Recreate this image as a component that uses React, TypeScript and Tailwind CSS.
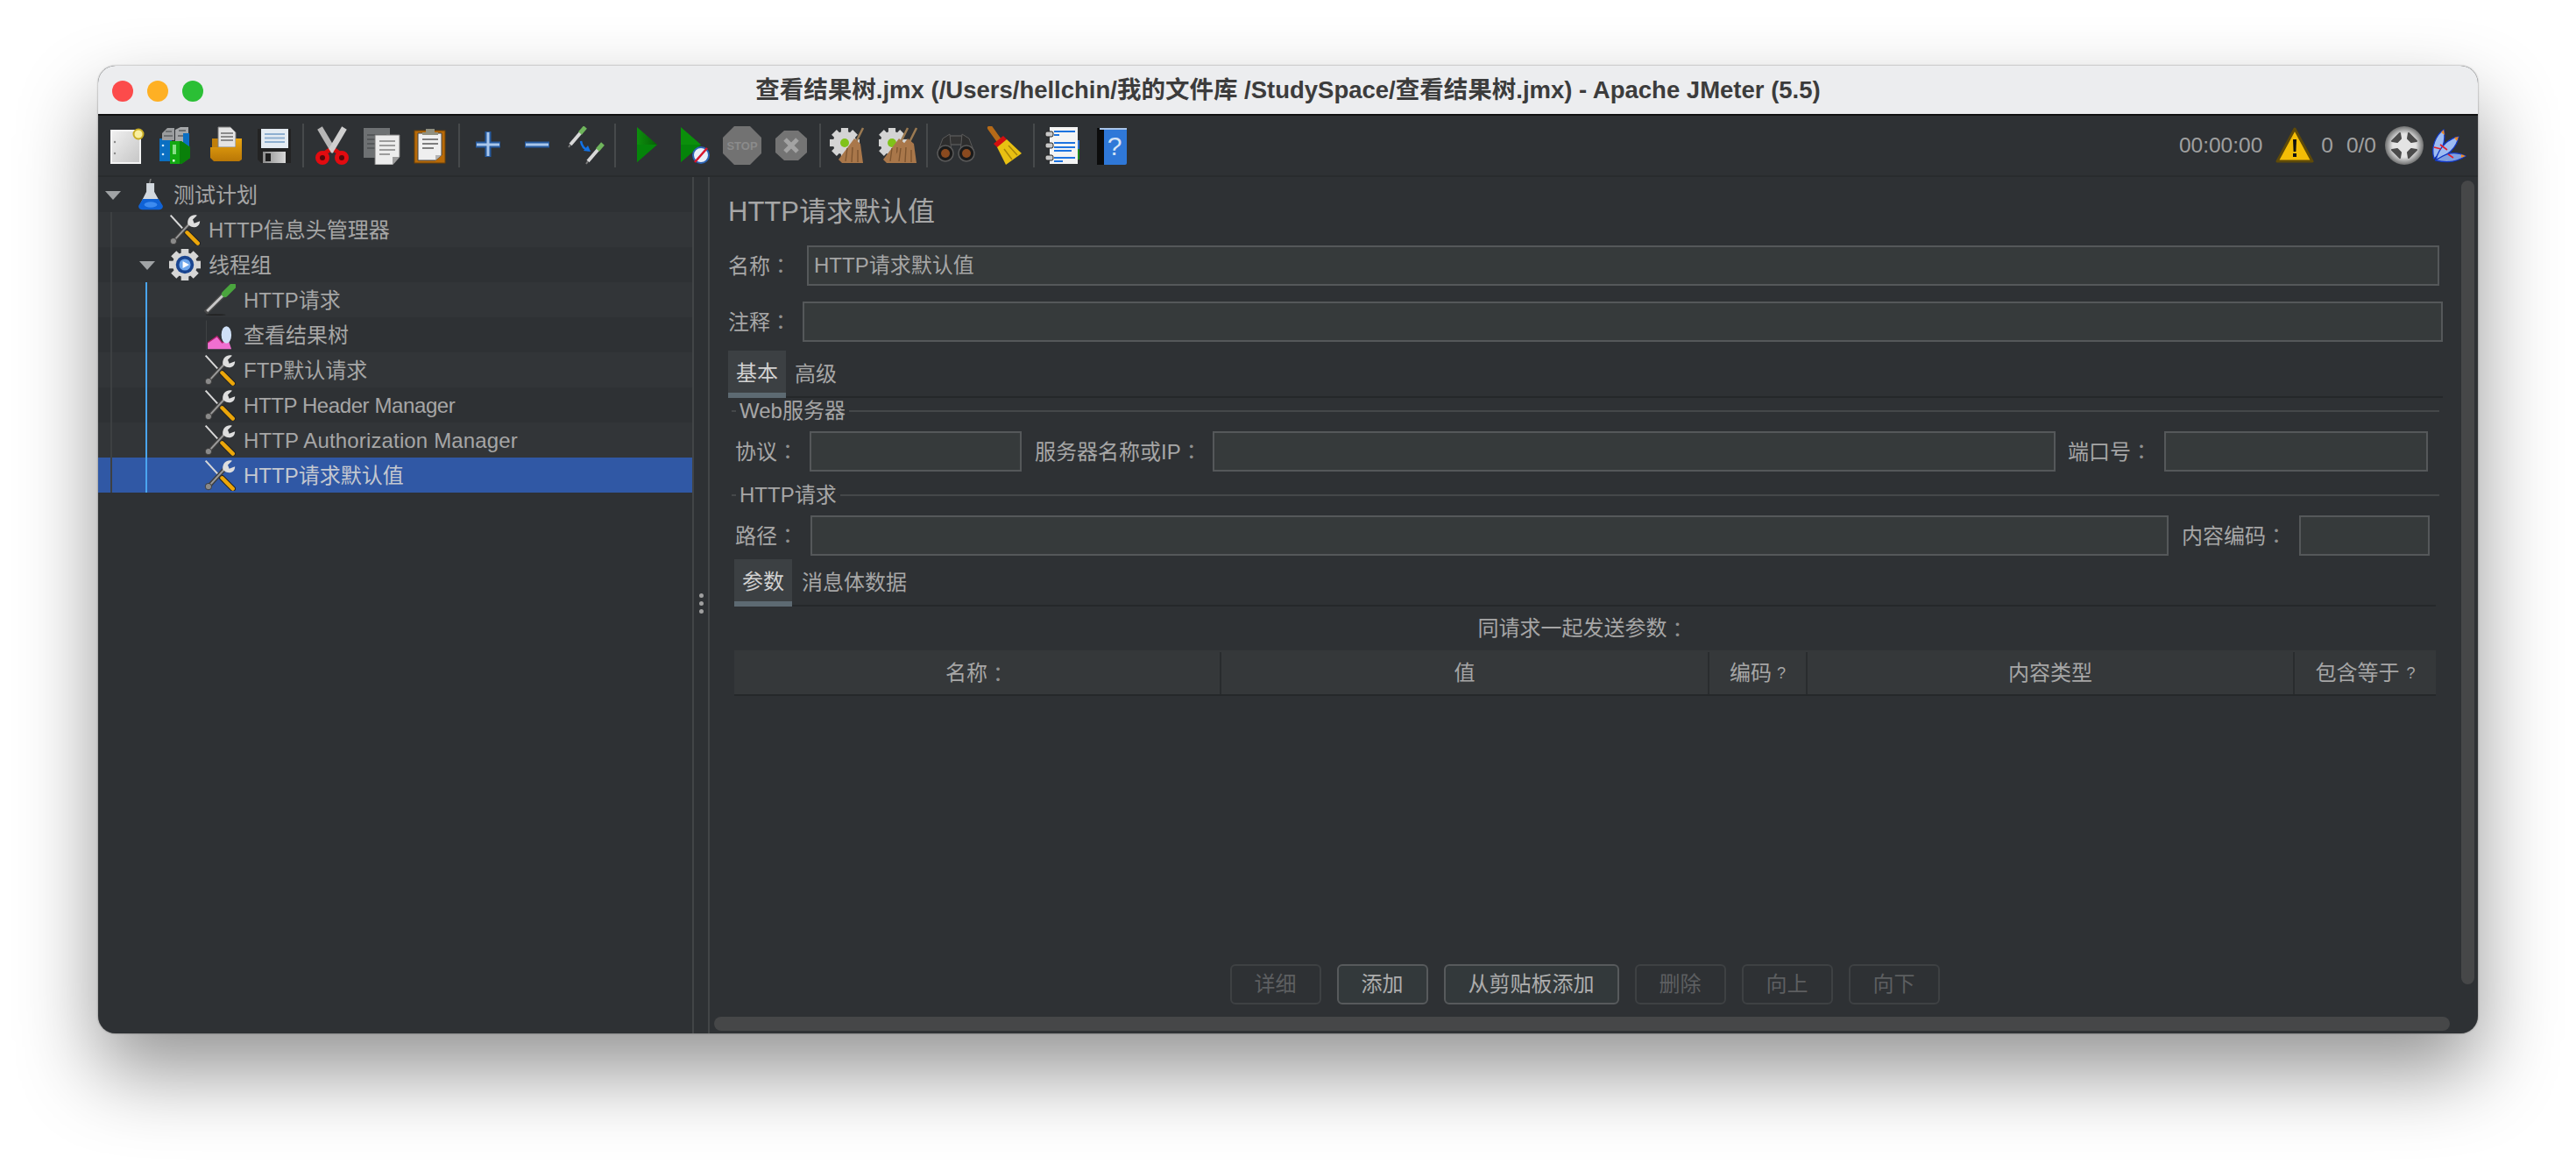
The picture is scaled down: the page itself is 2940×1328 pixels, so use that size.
import type { ReactNode } from 'react';

const Svg = ({ size = 44, children }: { size?: number; children: ReactNode }) => (
  <svg width={size} height={size} viewBox="0 0 44 44" className="block shrink-0">
    {children}
  </svg>
);

const teeth = [0, 45, 90, 135, 180, 225, 270, 315];

// shared cog shape, used by the tree gear and the clear icons
const Cog = ({ cx, cy, r, fill }: { cx: number; cy: number; r: number; fill: string }) => (
  <g>
    {teeth.map((a) => (
      <rect
        key={a}
        x={cx - r * 0.24}
        y={cy - r}
        width={r * 0.48}
        height={r * 0.4}
        fill={fill}
        transform={`rotate(${a} ${cx} ${cy})`}
      />
    ))}
    <circle cx={cx} cy={cy} r={r * 0.78} fill={fill} />
  </g>
);

// toolbar icons
const NewIcon = () => (
  <Svg>
    <defs>
      <linearGradient id="newg" x1="0" y1="0" x2="1" y2="1">
        <stop offset="0" stopColor="#f0f0f0" />
        <stop offset="1" stopColor="#c6c6c6" />
      </linearGradient>
    </defs>
    <rect x="4" y="5" width="33" height="37" fill="url(#newg)" stroke="#f4f4f4" strokeWidth="2" />
    <circle cx="8" cy="18" r="1.2" fill="#8a8a8a" />
    <circle cx="8" cy="31" r="1.2" fill="#8a8a8a" />
    <circle cx="35" cy="9" r="5.5" fill="#f9ef9f" stroke="#c9ad25" strokeWidth="2" />
  </Svg>
);
const TemplatesIcon = () => (
  <Svg>
    <rect x="3" y="14" width="14" height="26" fill="#0b6fc2" />
    <path d="M6 8 L12 2 H20 V16 H6 Z" fill="#9a9c9e" />
    <path d="M21 4 L27 1 H36 V18 H21 Z" fill="#a6a8aa" />
    <path d="M10 6 H17 M25 5 H33 M8 11 H18 M24 11 H34" stroke="#6d7072" strokeWidth="2" />
    <rect x="30" y="8" width="7" height="24" fill="#0b6fc2" />
    <circle cx="7" cy="22" r="1.3" fill="#d5ecff" />
    <circle cx="7" cy="32" r="1.3" fill="#d5ecff" />
    <path d="M15 17 H28 L38 24 V36 L28 43 H15 Z" fill="#12a812" />
    <path d="M26 17 H28 L38 24 V36 L28 43 H26 Z" fill="#0a800a" />
    <rect x="18" y="21" width="4" height="11" fill="#86de86" />
    <rect x="18" y="38" width="2.5" height="2.5" fill="#e8ffe8" />
  </Svg>
);
const OpenIcon = () => (
  <Svg>
    <defs>
      <linearGradient id="foldg" x1="0" y1="0" x2="0" y2="1">
        <stop offset="0" stopColor="#eaa511" />
        <stop offset="1" stopColor="#b97706" />
      </linearGradient>
    </defs>
    <rect x="7" y="14" width="8" height="14" fill="#c07f0a" />
    <path d="M14 1 H28 L34 7 V24 H14 Z" fill="#e4e4e4" stroke="#7f7f7f" strokeWidth="1" />
    <path d="M17 8 H31 M17 12 H31 M17 16 H31" stroke="#8b8b8b" strokeWidth="2" />
    <path d="M34 14 H41 V38 L38 40 H9 L5 36 V24 H34 Z" fill="url(#foldg)" />
  </Svg>
);
const SaveIcon = () => (
  <Svg>
    <defs>
      <linearGradient id="shutg" x1="0" y1="0" x2="1" y2="0">
        <stop offset="0" stopColor="#8c8c8c" />
        <stop offset="1" stopColor="#d8d8d8" />
      </linearGradient>
    </defs>
    <path d="M3 3 H41 V42 H7 L3 38 Z" fill="#232323" />
    <rect x="7" y="3" width="31" height="22" fill="#e4ebf2" />
    <path d="M11 9 H34 M11 13.5 H34 M11 18 H34" stroke="#8eafd0" strokeWidth="2" />
    <rect x="9" y="29" width="26" height="13" fill="url(#shutg)" />
    <rect x="12" y="31" width="6" height="9" fill="#1e1e1e" />
  </Svg>
);
const CutIcon = () => (
  <Svg>
    <path d="M8 2 L24 29" stroke="#b6b6b6" strokeWidth="6.5" />
    <path d="M36 2 L20 29" stroke="#cfcfcf" strokeWidth="6.5" />
    <path d="M19 27 L12 32 M25 27 L32 32" stroke="#d70d0d" strokeWidth="5" />
    <ellipse cx="11" cy="36" rx="5.5" ry="5.5" fill="#55080a" stroke="#e20b10" strokeWidth="5" />
    <ellipse cx="33" cy="36" rx="5.5" ry="5.5" fill="#55080a" stroke="#e20b10" strokeWidth="5" />
  </Svg>
);
const CopyIcon = () => (
  <Svg>
    <rect x="2" y="2" width="30" height="34" fill="#6e7173" />
    <path d="M6 10 H28 M6 15 H28 M6 20 H28 M6 25 H28" stroke="#55585a" strokeWidth="1.8" />
    <path d="M15 10 H43 V35 L35 44 H15 Z" fill="#ececec" stroke="#7a7a7a" strokeWidth="1" />
    <path d="M35 44 V35 H43 Z" fill="#9b9b9b" />
    <path d="M20 17 H38 M20 22 H38 M20 27 H38 M20 32 H32" stroke="#9c9c9c" strokeWidth="1.8" />
  </Svg>
);
const PasteIcon = () => (
  <Svg>
    <rect x="4" y="5" width="35" height="37" fill="#b86a08" stroke="#6c4208" strokeWidth="1" />
    <path d="M8 8 H35 V33 L28 39 H8 Z" fill="#efefef" stroke="#444" strokeWidth="1" />
    <path d="M28 39 V33 H35 Z" fill="#b4b4b4" />
    <path d="M13 15 H31 M13 20 H31 M13 25 H26" stroke="#7d7d7d" strokeWidth="1.8" />
    <path d="M17 7 V3 H27 V7 H31 V10 H13 V7 Z" fill="#8f8f7f" />
  </Svg>
);
const PlusIcon = () => (
  <Svg>
    <path d="M22 6 V35 M8 21 H36" stroke="#255a9f" strokeWidth="7" />
    <path d="M22 7 V34 M9 21 H35" stroke="#a9c6ea" strokeWidth="3" />
  </Svg>
);
const MinusIcon = () => (
  <Svg>
    <path d="M8 21 H36" stroke="#255a9f" strokeWidth="7" />
    <path d="M9 21 H35" stroke="#a9c6ea" strokeWidth="3" />
  </Svg>
);
const PipetteSmall = ({ x, y }: { x: number; y: number }) => (
  <g transform={`translate(${x} ${y})`}>
    <path d="M0 20 L12 6" stroke="#d8d8d8" strokeWidth="4" />
    <path d="M0 20 L-2 23" stroke="#777" strokeWidth="2" />
    <path d="M11 7 L17 0" stroke="#6fb55c" strokeWidth="5" />
  </g>
);
const ToggleIcon = () => (
  <Svg>
    <PipetteSmall x={4} y={1} />
    <PipetteSmall x={24} y={20} />
    <path d="M16 17 C17 23 20 26 24 27" fill="none" stroke="#1272e6" strokeWidth="2.5" />
    <path d="M19 28 L27 29 L24 22 Z" fill="#1272e6" />
  </Svg>
);
const StartIcon = () => (
  <Svg>
    <defs>
      <linearGradient id="playg" x1="0" y1="0" x2="1" y2="0">
        <stop offset="0" stopColor="#0d8f0d" />
        <stop offset="1" stopColor="#066006" />
      </linearGradient>
    </defs>
    <path d="M14 1 L37 21 L14 41 Z" fill="url(#playg)" />
    <path d="M14 21 L37 21 L14 41 Z" fill="#05840a" />
  </Svg>
);
const NoTimersIcon = () => (
  <Svg>
    <path d="M8 1 L31 21 L8 41 Z" fill="#0b8f0b" />
    <path d="M8 21 L31 21 L8 41 Z" fill="#05840a" />
    <circle cx="31" cy="33" r="9" fill="#e8eef8" stroke="#2b63b4" strokeWidth="2" />
    <path d="M24 41 L38 25" stroke="#d8152d" strokeWidth="2.5" />
  </Svg>
);
const StopIcon = () => (
  <Svg>
    <path d="M13 0 H31 L44 13 V31 L31 44 H13 L0 31 V13 Z" fill="#727272" />
    <text x="22" y="27" textAnchor="middle" fontSize="13" fontWeight="700" fill="#8b8b8b" fontFamily="Liberation Sans">STOP</text>
  </Svg>
);
const ShutdownIcon = () => (
  <Svg>
    <path d="M14 5 H30 L40 14 V30 L30 39 H14 L4 30 V14 Z" fill="#747474" />
    <path d="M15 15 L29 29 M29 15 L15 29" stroke="#a3a3a3" strokeWidth="5" />
  </Svg>
);
const Broom = ({ x = 0 }: { x?: number }) => (
  <g transform={`translate(${x} 0)`}>
    <path d="M38 2 L30 18" stroke="#9b7a52" strokeWidth="2.5" />
    <path d="M28 14 L35 20 L38 42 H14 L10 38 Z" fill="#a9774a" />
    <path d="M20 25 L18 40 M26 24 L25 41 M32 27 L32 41" stroke="#7e5530" strokeWidth="1.4" />
  </g>
);
const Gear = ({ x = 0 }: { x?: number }) => (
  <g transform={`translate(${x} 0)`}>
    <Cog cx={17} cy={19} r={17} fill="#d4d4d4" />
    <circle cx="17" cy="19" r="5" fill="#80c21a" />
  </g>
);
const ClearIcon = () => (
  <Svg>
    <Gear />
    <Broom />
  </Svg>
);
const ClearAllIcon = () => (
  <Svg>
    <Gear x={-2} />
    <Broom x={-5} />
    <Broom x={5} />
  </Svg>
);
const SearchIcon = () => (
  <Svg>
    <rect x="15" y="11" width="14" height="10" fill="#333" stroke="#666" />
    <path d="M7 14 L15 9 L17 30 H1 Z" fill="#2d2d2d" stroke="#5a5a5a" strokeWidth="1" />
    <path d="M37 14 L29 9 L27 30 H43 Z" fill="#2d2d2d" stroke="#5a5a5a" strokeWidth="1" />
    <circle cx="10" cy="31" r="9" fill="#1b1b1b" stroke="#5a5a5a" strokeWidth="1.5" />
    <circle cx="34" cy="31" r="9" fill="#1b1b1b" stroke="#5a5a5a" strokeWidth="1.5" />
    <circle cx="10" cy="31" r="5" fill="#8a4a1f" />
    <circle cx="34" cy="31" r="5" fill="#8a4a1f" />
  </Svg>
);
const BroomIcon = () => (
  <Svg>
    <path d="M5 2 L15 16" stroke="#b56a18" strokeWidth="6" strokeLinecap="round" />
    <path d="M9 20 L20 11 L24 15 L14 25 Z" fill="#d30f0f" />
    <path d="M13 24 L24 15 L41 31 L23 44 Z" fill="#e8c012" />
    <path d="M21 26 L30 38 M26 22 L36 33" stroke="#a88508" strokeWidth="1.5" />
  </Svg>
);
const LogIcon = () => (
  <Svg>
    <rect x="36" y="16" width="5" height="10" fill="#2a6cc4" />
    <rect x="36" y="26" width="5" height="12" fill="#1d8a1d" />
    <rect x="7" y="1" width="32" height="42" fill="#f4f4f4" />
    <path d="M12 6 H36 M12 10 H18 M12 19 H36 M12 24 H36 M12 28 H32 M12 36 H36 M12 40 H22" stroke="#1e74e0" strokeWidth="2" />
    <rect x="2" y="6" width="9" height="6" rx="2" fill="#c8c8c8" stroke="#222" />
    <rect x="2" y="19" width="9" height="6" rx="2" fill="#c8c8c8" stroke="#222" />
    <rect x="2" y="33" width="9" height="6" rx="2" fill="#c8c8c8" stroke="#222" />
  </Svg>
);
const HelpIcon = () => (
  <Svg>
    <rect x="5" y="2" width="34" height="42" rx="2" fill="#2f78d8" />
    <rect x="5" y="2" width="8" height="42" fill="#0c0c0c" />
    <rect x="8" y="2" width="31" height="2" fill="#a8c4ea" />
    <text x="25" y="33" textAnchor="middle" fontSize="30" fill="#d6e4f6" fontFamily="Liberation Sans">?</text>
  </Svg>
);
const WarningIcon = () => (
  <Svg>
    <path d="M22 3 L42 40 H2 Z" fill="#f4bd06" stroke="#5f4a08" strokeWidth="3" strokeLinejoin="round" />
    <path d="M20 15 H24 L23.4 29 H20.6 Z" fill="#111" />
    <rect x="20" y="31" width="4" height="4" fill="#111" />
  </Svg>
);
const GuiIcon = () => (
  <Svg>
    <defs>
      <radialGradient id="guig">
        <stop offset="0.6" stopColor="#e4e4e4" />
        <stop offset="1" stopColor="#6f7070" />
      </radialGradient>
    </defs>
    <circle cx="22" cy="22" r="22" fill="url(#guig)" />
    <path d="M8 17 L17 8 L18 14 L14 18 Z M36 17 L27 8 L26 14 L30 18 Z M8 27 L17 36 L18 30 L14 26 Z M36 27 L27 36 L26 30 L30 26 Z" fill="#4b4b4b" stroke="#4b4b4b" strokeWidth="2" strokeLinejoin="round" />
  </Svg>
);
const FeatherIcon = () => (
  <Svg>
    <path d="M6 37 C2 24 8 10 17 4 C20 16 15 30 6 37 Z" fill="#9dbcf2" stroke="#1238c4" strokeWidth="1.3" />
    <path d="M8 38 C12 24 22 14 34 12 C32 24 22 34 8 38 Z" fill="#9dbcf2" stroke="#1238c4" strokeWidth="1.3" />
    <path d="M8 39 C20 30 30 28 42 34 C32 41 20 42 8 39 Z" fill="#7f9fe0" stroke="#1238c4" strokeWidth="1.3" />
    <path d="M14 7 L17 4 L18 10 Z M29 13 L34 12 L32 17 Z M37 32 L42 34 L37 36 Z" fill="#f08a1d" />
    <path d="M6 24 L14 26 M13 21 L21 27 M22 32 L28 36" stroke="#e3202c" strokeWidth="1.6" />
  </Svg>
);

// tree icons
const FlaskIcon = () => (
  <Svg size={36}>
    <path d="M22 0 L20 8" stroke="#777" strokeWidth="2" />
    <path d="M16 6 H27 V18 L38 38 Q38 42 34 42 H10 Q6 42 6 38 L16 18 Z" fill="#d2d8de" />
    <path d="M11 28 H33 L39 38 Q39 43 34 43 H10 Q5 43 5 38 Z" fill="#0f62d6" />
    <ellipse cx="22" cy="36" rx="9" ry="4" fill="#3d8bf0" />
  </Svg>
);
const ToolIcon = () => (
  <Svg size={36}>
    <path d="M2 2 L25 27" stroke="#d8d8d8" strokeWidth="2.5" />
    <path d="M25 26 L40 41" stroke="#222" strokeWidth="8" strokeLinecap="round" />
    <path d="M25 26 L40 41" stroke="#eba60a" strokeWidth="5.5" strokeLinecap="round" />
    <path d="M6 38 L30 12" stroke="#3d3d3d" strokeWidth="6" />
    <path d="M6 38 L30 12" stroke="#9a9a9a" strokeWidth="2.5" />
    <circle cx="6" cy="38" r="4.5" fill="#8a8a8a" stroke="#333" strokeWidth="1" />
    <path d="M26 14 C25 6 31 0 39 2 L33 8 L35 13 L43 10 C43 19 33 22 26 14 Z" fill="#dedede" />
  </Svg>
);
const GearIcon = () => (
  <Svg size={36}>
    <Cog cx={22} cy={22} r={22} fill="#d6d6d6" />
    <circle cx="22" cy="22" r="12.5" fill="#1a4590" />
    <circle cx="22" cy="22" r="8" fill="#6ca6ec" />
    <path d="M19 17 L28 22 L19 27 Z" fill="#fff" />
  </Svg>
);
const PipetteIcon = () => (
  <Svg size={36}>
    <path d="M2 40 L28 14" stroke="#4a4a4a" strokeWidth="7" />
    <path d="M4 38 L28 14" stroke="#c8c8c8" strokeWidth="3.5" />
    <path d="M29 14 L40 3" stroke="#4aa53e" strokeWidth="9" strokeLinecap="round" />
    <ellipse cx="16" cy="43" rx="14" ry="1" fill="#222" />
  </Svg>
);
const ChartIcon = () => (
  <Svg size={36}>
    <path d="M3 2 V43" stroke="#45484a" strokeWidth="1" />
    <path d="M5 42 V33 L18 24 L25 33 L34 30 L38 42 Z" fill="#f06fd0" />
    <path d="M5 33 L18 24 L25 33 L34 30" fill="none" stroke="#b01f6a" strokeWidth="1.5" />
    <ellipse cx="31" cy="22" rx="7" ry="12" fill="#cfe0f7" />
  </Svg>
);

const TOOLS = [
  { icon: <NewIcon /> }, { icon: <TemplatesIcon /> }, { icon: <OpenIcon /> }, { icon: <SaveIcon /> },
];

const Slot = ({ children }: { children: ReactNode }) => (
  <div className="flex h-[44px] w-[56px] items-center justify-center">{children}</div>
);
const Sep = () => <div className="mx-[4px] h-[50px] w-[2px] bg-[#46494b]" />;

const Colon = () => <span className="font-['Noto_Sans_CJK_TC',sans-serif] text-[#8f8f8f]">：</span>;

const Input = ({ className = '', children }: { className?: string; children?: ReactNode }) => (
  <div className={`flex h-[46px] items-center border-2 border-[#55585a] bg-[#363a3b] pl-[6px] text-[24px] ${className}`}>
    {children}
  </div>
);

const Group = ({ title }: { title: string }) => (
  <div className="ml-[4px] mr-[4px] flex h-[30px] items-center">
    <div className="h-[2px] w-[5px] bg-[#45484a]" />
    <span className="ml-[4px] mr-[4px] text-[24px] leading-none">{title}</span>
    <div className="h-[2px] flex-1 bg-[#45484a]" />
  </div>
);

const Tab = ({ label }: { label: string }) => (
  <div className="flex h-[54px] w-[66px] items-center justify-center border-b-[6px] border-[#5d6a72] bg-[#3c4043] pt-[4px] text-[24px] text-[#d2d2d2]">
    {label}
  </div>
);

const treeRows = [
  { label: '测试计划', pad: 'pl-[8px]', caret: 'mr-[16px]', gap: 'mr-[8px]', icon: <FlaskIcon />, alt: false },
  { label: 'HTTP信息头管理器', pad: 'pl-[81px]', icon: <ToolIcon />, alt: true },
  { label: '线程组', pad: 'pl-[47px]', caret: 'mr-[16px]', icon: <GearIcon />, alt: false },
  { label: 'HTTP请求', pad: 'pl-[121px]', icon: <PipetteIcon />, alt: true },
  { label: '查看结果树', pad: 'pl-[121px]', icon: <ChartIcon />, alt: false },
  { label: 'FTP默认请求', pad: 'pl-[121px]', icon: <ToolIcon />, alt: true },
  { label: 'HTTP Header Manager', pad: 'pl-[121px]', icon: <ToolIcon />, alt: false, track: 'tracking-[-0.4px]' },
  { label: 'HTTP Authorization Manager', pad: 'pl-[121px]', icon: <ToolIcon />, alt: true, track: 'tracking-[0.15px]' },
  { label: 'HTTP请求默认值', pad: 'pl-[121px]', icon: <ToolIcon />, selected: true },
];

const columns = [
  { w: 'w-[556px]', label: <>名称<Colon /></> },
  { w: 'w-[557px]', label: '值' },
  { w: 'w-[112px]', label: <>编码<span className="ml-[6px] text-[18px]">?</span></> },
  { w: 'w-[556px]', label: '内容类型' },
  { w: 'flex-1', label: <>包含等于<span className="ml-[8px] text-[18px]">?</span></> },
];

const buttons = [
  { label: '详细', w: 'w-[104px]' },
  { label: '添加', w: 'w-[104px]', on: true },
  { label: '从剪贴板添加', w: 'w-[200px]', on: true },
  { label: '删除', w: 'w-[104px]' },
  { label: '向上', w: 'w-[104px]' },
  { label: '向下', w: 'w-[104px]' },
];

export default function App() {
  return (
    <div className="h-[1328px] w-[2940px] overflow-hidden bg-white pl-[112px] pt-[75px] font-['Liberation_Sans','Noto_Sans_CJK_SC',sans-serif]">
      <div className="flex h-[1104px] w-[2716px] flex-col overflow-hidden rounded-[20px] bg-[#2e3134] text-[#a6a6a6] shadow-[0_44px_90px_rgba(0,0,0,0.42),0_0_2px_rgba(0,0,0,0.5)]">
        {/* title bar */}
        <div className="relative flex h-[57px] shrink-0 items-center justify-center border-b-2 border-[#111] bg-[#ecedef]">
          <div className="absolute left-[16px] top-[17px] flex gap-[16px]">
            <div className="h-[24px] w-[24px] rounded-full bg-[#fc4b4b]" />
            <div className="h-[24px] w-[24px] rounded-full bg-[#feb024]" />
            <div className="h-[24px] w-[24px] rounded-full bg-[#2bbf35]" />
          </div>
          <span className="text-[27.5px] font-bold text-[#3c3c3c]">
            查看结果树.jmx (/Users/hellchin/我的文件库 /StudySpace/查看结果树.jmx) - Apache JMeter (5.5)
          </span>
        </div>

        {/* toolbar */}
        <div className="flex h-[70px] shrink-0 items-center border-b-2 border-[#282b2d] pl-[5px]">
          {TOOLS.map((t, i) => <Slot key={i}>{t.icon}</Slot>)}
          <Sep />
          <Slot><CutIcon /></Slot>
          <Slot><CopyIcon /></Slot>
          <Slot><PasteIcon /></Slot>
          <Sep />
          <Slot><PlusIcon /></Slot>
          <Slot><MinusIcon /></Slot>
          <Slot><ToggleIcon /></Slot>
          <Sep />
          <Slot><StartIcon /></Slot>
          <Slot><NoTimersIcon /></Slot>
          <Slot><StopIcon /></Slot>
          <Slot><ShutdownIcon /></Slot>
          <Sep />
          <Slot><ClearIcon /></Slot>
          <Slot><ClearAllIcon /></Slot>
          <Sep />
          <Slot><SearchIcon /></Slot>
          <Slot><BroomIcon /></Slot>
          <Sep />
          <Slot><LogIcon /></Slot>
          <Slot><HelpIcon /></Slot>
          <div className="ml-auto flex items-center pr-[12px] text-[24.5px] text-[#a0a0a0]">
            <span>00:00:00</span>
            <div className="ml-[15px]"><WarningIcon /></div>
            <span className="ml-[8px]">0</span>
            <span className="ml-[15px]">0/0</span>
            <div className="ml-[10px]"><GuiIcon /></div>
            <div className="ml-[6px]"><FeatherIcon /></div>
          </div>
        </div>

        <div className="flex min-h-0 flex-1">
          {/* tree */}
          <div className="relative w-[678px] shrink-0">
            {treeRows.map((row) => (
              <div
                key={row.label}
                className={`flex h-[40px] items-center pt-[2px] text-[24px] ${row.pad} ${row.selected ? 'bg-[#3058a5] text-[#c4c8d0]' : row.alt ? 'bg-[#323538]' : ''}`}
              >
                {row.caret && (
                  <div className={`h-0 w-0 border-x-[9px] border-t-[10px] border-x-transparent border-t-[#a0a3a5] ${row.caret}`} />
                )}
                <div className={`-mt-[2px] ${row.gap ?? 'mr-[9px]'}`}>{row.icon}</div>
                <span className={row.track}>{row.label}</span>
              </div>
            ))}
            <div className="absolute left-[14px] top-[40px] h-[320px] w-[2px] bg-[#3d4042]" />
            <div className="absolute left-[54px] top-[120px] h-[240px] w-[2px] bg-[#4aa5f0]" />
          </div>

          {/* splitter */}
          <div className="flex w-[20px] shrink-0 flex-col items-center justify-center gap-[4px] border-x-2 border-[#424547] pb-[4px]">
            <div className="h-[5px] w-[5px] rounded-full bg-[#a0a0a0]" />
            <div className="h-[5px] w-[5px] rounded-full bg-[#a0a0a0]" />
            <div className="h-[5px] w-[5px] rounded-full bg-[#a0a0a0]" />
          </div>

          {/* editor */}
          <div className="relative flex min-w-0 flex-1 flex-col pb-[33px] pl-[21px] pr-[40px] text-[24px]">
            <div className="flex h-[78px] shrink-0 items-center pt-[2px] text-[31px]">HTTP请求默认值</div>

            <div className="mr-[4px] flex items-center">
              <span className="w-[90px] shrink-0">名称<Colon /></span>
              <Input className="flex-1">HTTP请求默认值</Input>
            </div>
            <div className="mt-[18px] flex items-center">
              <span className="w-[85px] shrink-0">注释<Colon /></span>
              <Input className="flex-1" />
            </div>

            <div className="mt-[10px] flex h-[54px] items-start border-b-2 border-[#25282a]">
              <Tab label="基本" />
              <span className="ml-[10px] flex h-[52px] items-center pt-[2px]">高级</span>
            </div>

            <Group title="Web服务器" />
            <div className="mr-[17px] mt-[8px] flex items-center pl-[8px]">
              <span className="w-[85px] shrink-0">协议<Colon /></span>
              <Input className="w-[242px] shrink-0" />
              <span className="ml-[15px] w-[203px] shrink-0">服务器名称或IP<Colon /></span>
              <Input className="flex-1" />
              <span className="ml-[14px] w-[110px] shrink-0">端口号<Colon /></span>
              <Input className="w-[301px] shrink-0" />
            </div>

            <div className="mt-[12px]"><Group title="HTTP请求" /></div>
            <div className="mr-[15px] mt-[8px] flex items-center pl-[8px]">
              <span className="w-[86px] shrink-0">路径<Colon /></span>
              <Input className="flex-1" />
              <span className="ml-[15px] w-[134px] shrink-0">内容编码<Colon /></span>
              <Input className="w-[149px] shrink-0" />
            </div>

            <div className="ml-[7px] mr-[8px] mt-[4px] flex h-[54px] items-start border-b-2 border-[#25282a]">
              <Tab label="参数" />
              <span className="ml-[11px] flex h-[52px] items-center pt-[2px]">消息体数据</span>
            </div>

            <div className="flex h-[50px] items-center justify-center pr-[6px]">同请求一起发送参数<Colon /></div>

            <div className="ml-[7px] mr-[8px] flex h-[52px] border-b-2 border-[#25282a] bg-[#35383a] pt-[2px]">
              {columns.map((c, i) => (
                <div
                  key={i}
                  className={`flex items-center justify-center border-r-2 border-[#292c2e] last:border-r-0 ${c.w}`}
                >
                  {c.label}
                </div>
              ))}
            </div>

            <div className="mt-auto flex justify-center gap-[18px] pr-[2px]">
              {buttons.map((b) => (
                <div
                  key={b.label}
                  className={`flex h-[46px] items-center justify-center rounded-[6px] border-2 ${b.w} ${b.on ? 'border-[#575a5c] bg-[#33393b] text-[#adadad]' : 'border-[#3e4143] text-[#5d5f61]'}`}
                >
                  {b.label}
                </div>
              ))}
            </div>

            {/* scrollbars */}
            <div className="absolute right-[4px] top-[4px] h-[917px] w-[15px] rounded-full bg-[#464748]" />
            <div className="absolute bottom-[3px] left-[5px] right-[32px] h-[16px] rounded-[8px] bg-[#464748]" />
          </div>
        </div>
      </div>
    </div>
  );
}
